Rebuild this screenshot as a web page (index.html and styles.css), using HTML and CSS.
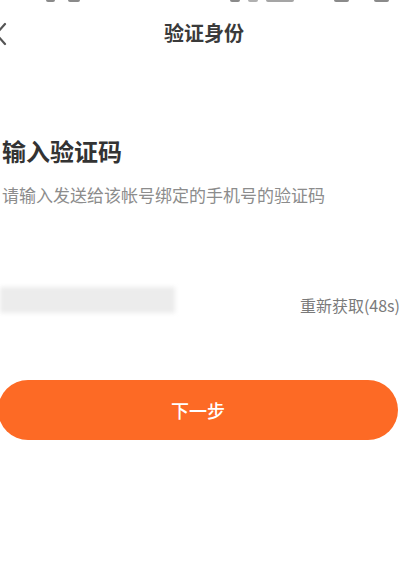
FILE: index.html
```html
<!DOCTYPE html>
<html lang="zh-CN">
<head>
<meta charset="utf-8">
<title>验证身份</title>
<link rel="stylesheet" href="styles.css">
</head>
<body>
<div class="page">
  <div class="status">
    <span class="sb sb-a"></span>
    <span class="sb sb-b"></span>
    <span class="sb sb-c"></span>
    <span class="sb sb-d"></span>
    <span class="sb sb-e"></span>
    <span class="sb sb-f"></span>
    <span class="sb sb-g"></span>
  </div>
  <div class="nav">
    <span class="back">
      <svg width="14" height="24" viewBox="0 0 14 24"><path d="M10 2 L1 12 L10 22" fill="none" stroke="#555" stroke-width="2.2" stroke-linecap="round" stroke-linejoin="round"/></svg>
    </span>
    <span class="title">验证身份</span>
    <span class="nav-right"></span>
  </div>
  <h1 class="heading">输入验证码</h1>
  <p class="sub">请输入发送给该帐号绑定的手机号的验证码</p>
  <div class="code-row">
    <div class="code-input"></div>
    <span class="resend">重新获取(48s)</span>
  </div>
  <button class="next">下一步</button>
</div>
</body>
</html>
```
FILE: styles.css
```css
html, body {
  margin: 0;
  padding: 0;
  background: #ffffff;
}
body {
  font-family: "Noto Sans CJK SC", "Noto Sans", sans-serif;
  color: #333333;
  overflow: hidden;
}
.page {
  width: 400px;
  height: 573px;
  display: flex;
  flex-direction: column;
  overflow: hidden;
}
.status {
  height: 10px;
  display: flex;
  align-items: flex-start;
}
.sb {
  height: 2px;
  background: #8a8a8a;
  border-radius: 0 0 2px 2px;
  filter: blur(0.6px);
}
.sb-a { margin-left: 46px; width: 9px; }
.sb-b { margin-left: 13px; width: 12px; }
.sb-c { margin-left: 150px; width: 10px; }
.sb-d { margin-left: 8px; width: 10px; background: #b0b0b0; }
.sb-e { margin-left: 8px; width: 28px; background: #a5a5a5; }
.sb-f { margin-left: 40px; width: 15px; }
.sb-g { margin-left: 25px; width: 15px; }
.nav {
  height: 46px;
  display: grid;
  grid-template-columns: 40px 1fr 40px;
  align-items: center;
}
.back {
  display: flex;
  align-items: center;
  margin-left: -5px;
  margin-top: 1px;
}
.title {
  text-align: center;
  font-size: 20px;
  font-weight: 700;
  color: #3a3a3a;
  padding-left: 8px;
  line-height: 28px;
}
.heading {
  margin: 79px 0 0 2px;
  font-size: 24px;
  line-height: 32px;
  font-weight: 700;
  color: #333333;
}
.sub {
  margin: 17px 0 0 2px;
  font-size: 17px;
  line-height: 22px;
  color: #8c8c8c;
}
.code-row {
  margin-top: 81px;
  display: flex;
  align-items: center;
  justify-content: space-between;
  height: 30px;
}
.code-input {
  width: 175px;
  height: 26px;
  margin-top: -4px;
  background: #ececec;
  filter: blur(2px);
}
.resend {
  font-size: 16px;
  line-height: 20px;
  color: #7a7a7a;
  white-space: nowrap;
  margin-top: 6px;
}
.next {
  margin: 63px 0 0 -2px;
  width: 400px;
  height: 60px;
  border: none;
  border-radius: 30px;
  background: #fd6a25;
  color: #ffffff;
  font-family: inherit;
  font-size: 18px;
  font-weight: 500;
  padding: 0;
}
```
